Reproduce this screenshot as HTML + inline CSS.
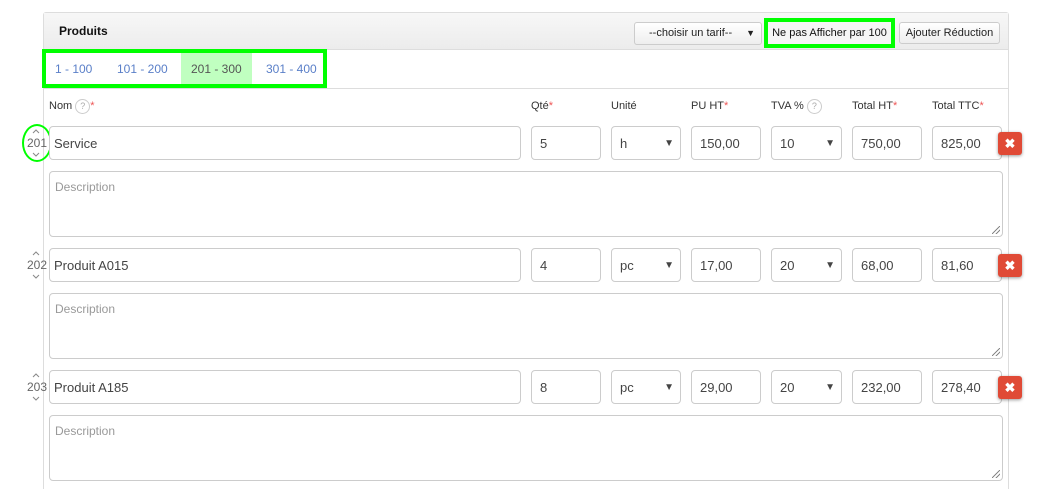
<!DOCTYPE html>
<html><head><meta charset="utf-8"><style>
*{box-sizing:border-box;margin:0;padding:0}
html,body{width:1037px;height:489px;overflow:hidden}
body{background:#fff;font-family:"Liberation Sans",Arial,sans-serif;font-size:12px;color:#333;position:relative}
.a{position:absolute}
.panel{left:43px;top:12px;width:966px;height:500px;border:1px solid #ddd;border-bottom:none;border-radius:3px 3px 0 0}
.head{left:44px;top:13px;width:964px;height:37px;background:linear-gradient(#f7f7f7,#ececec);border-bottom:1px solid #ddd}
.btn{background:linear-gradient(#fff,#eee);border:1px solid #ccc;border-radius:3px;font-size:11px;color:#222;text-align:center;line-height:21px}
.tabline{left:44px;top:88px;width:964px;border-top:1px solid #ddd}
.tab{top:62px;font-size:12px;color:#5a7fc8}
.lbl{top:99px;font-size:11px;color:#333;line-height:15px;white-space:nowrap}
.st{color:#e55}
.q{display:inline-block;width:15px;height:15px;border:1px solid #ccc;border-radius:50%;color:#aaa;font-size:9px;text-align:center;line-height:13px;vertical-align:top}
.in{height:34px;border:1px solid #ccc;border-radius:4px;font-size:13px;color:#444;padding-left:8px;line-height:34px;background:#fff}
.ta{height:66px;left:49px;width:954px;border:1px solid #ccc;border-radius:4px;color:#999;font-size:12px;padding:8px 0 0 5px}
.sel::after{content:"▼";position:absolute;right:6px;top:0;font-size:10px;color:#444}
.x{width:24px;height:23px;background:#e04a36;border-radius:3px;box-shadow:0 1px 3px rgba(0,0,0,.4);color:#fff;font-weight:bold;text-align:center;line-height:23px;font-size:13px}
.num{left:27px;font-size:12px;color:#666;width:22px;line-height:14px}
.ar{left:32px}
.grip{right:2px;bottom:2px;width:8px;height:8px;background:linear-gradient(135deg,transparent 45%,#888 45%,#888 55%,transparent 55%,transparent 70%,#888 70%,#888 80%,transparent 80%)}
</style></head><body>
<div class="a panel"></div>
<div class="a head"></div>
<div class="a" style="left:59px;top:24px;font-weight:bold;font-size:12px;color:#111">Produits</div>
<div class="a btn" style="left:634px;top:22px;width:128px;height:23px;text-align:left;padding-left:14px">--choisir un tarif--<span style="position:absolute;right:6px;font-size:9px">▼</span></div>
<div class="a" style="left:764px;top:18px;width:131px;height:30px;border:4px solid #00ff00;background:#f5f5f5;font-size:11px;text-align:center;line-height:22px;color:#111">Ne pas Afficher par 100</div>
<div class="a btn" style="left:899px;top:22px;width:101px;height:22px">Ajouter Réduction</div>
<div class="a" style="left:181px;top:53px;width:71px;height:34px;background:#c0ffc0"></div>
<div class="a" style="left:42px;top:49px;width:285px;height:39px;border:4px solid #00ff00"></div>
<div class="a tab" style="left:55px">1 - 100</div>
<div class="a tab" style="left:117px">101 - 200</div>
<div class="a tab" style="left:191px;color:#555">201 - 300</div>
<div class="a tab" style="left:266px">301 - 400</div>
<div class="a tabline"></div>
<div class="a lbl" style="left:49px">Nom <span class="q">?</span><span class="st">*</span></div>
<div class="a lbl" style="left:531px">Qté<span class="st">*</span></div>
<div class="a lbl" style="left:611px">Unité</div>
<div class="a lbl" style="left:691px">PU HT<span class="st">*</span></div>
<div class="a lbl" style="left:771px">TVA % <span class="q">?</span></div>
<div class="a lbl" style="left:852px">Total HT<span class="st">*</span></div>
<div class="a lbl" style="left:932px">Total TTC<span class="st">*</span></div>

<div class="a" style="left:0;top:126px;width:1037px;height:112px">
<svg class="a ar" style="top:3px" width="8" height="5"><path d="M1 4L4 1L7 4" fill="none" stroke="#888"/></svg>
<div class="a num" style="top:10px">201</div>
<svg class="a ar" style="top:26px" width="8" height="5"><path d="M1 1L4 4L7 1" fill="none" stroke="#888"/></svg>
<div class="a" style="left:22px;top:-2px;width:30px;height:38px;border:2px solid #00ff00;border-radius:50%"></div>
<div class="a in" style="left:49px;width:472px;padding-left:4px">Service</div>
<div class="a in" style="left:531px;width:70px">5</div>
<div class="a in sel" style="left:611px;width:70px">h</div>
<div class="a in" style="left:691px;width:70px">150,00</div>
<div class="a in sel" style="left:771px;width:71px">10</div>
<div class="a in" style="left:852px;width:70px">750,00</div>
<div class="a in" style="left:932px;width:70px">825,00</div>
<div class="a x" style="left:998px;top:6px">✖</div>
<div class="a ta" style="top:45px">Description<div class="a grip"></div></div>
</div>
<div class="a" style="left:0;top:248px;width:1037px;height:112px">
<svg class="a ar" style="top:3px" width="8" height="5"><path d="M1 4L4 1L7 4" fill="none" stroke="#888"/></svg>
<div class="a num" style="top:10px">202</div>
<svg class="a ar" style="top:26px" width="8" height="5"><path d="M1 1L4 4L7 1" fill="none" stroke="#888"/></svg>
<div class="a in" style="left:49px;width:472px;padding-left:4px">Produit A015</div>
<div class="a in" style="left:531px;width:70px">4</div>
<div class="a in sel" style="left:611px;width:70px">pc</div>
<div class="a in" style="left:691px;width:70px">17,00</div>
<div class="a in sel" style="left:771px;width:71px">20</div>
<div class="a in" style="left:852px;width:70px">68,00</div>
<div class="a in" style="left:932px;width:70px">81,60</div>
<div class="a x" style="left:998px;top:6px">✖</div>
<div class="a ta" style="top:45px">Description<div class="a grip"></div></div>
</div>
<div class="a" style="left:0;top:370px;width:1037px;height:112px">
<svg class="a ar" style="top:3px" width="8" height="5"><path d="M1 4L4 1L7 4" fill="none" stroke="#888"/></svg>
<div class="a num" style="top:10px">203</div>
<svg class="a ar" style="top:26px" width="8" height="5"><path d="M1 1L4 4L7 1" fill="none" stroke="#888"/></svg>
<div class="a in" style="left:49px;width:472px;padding-left:4px">Produit A185</div>
<div class="a in" style="left:531px;width:70px">8</div>
<div class="a in sel" style="left:611px;width:70px">pc</div>
<div class="a in" style="left:691px;width:70px">29,00</div>
<div class="a in sel" style="left:771px;width:71px">20</div>
<div class="a in" style="left:852px;width:70px">232,00</div>
<div class="a in" style="left:932px;width:70px">278,40</div>
<div class="a x" style="left:998px;top:6px">✖</div>
<div class="a ta" style="top:45px">Description<div class="a grip"></div></div>
</div>
</body></html>
